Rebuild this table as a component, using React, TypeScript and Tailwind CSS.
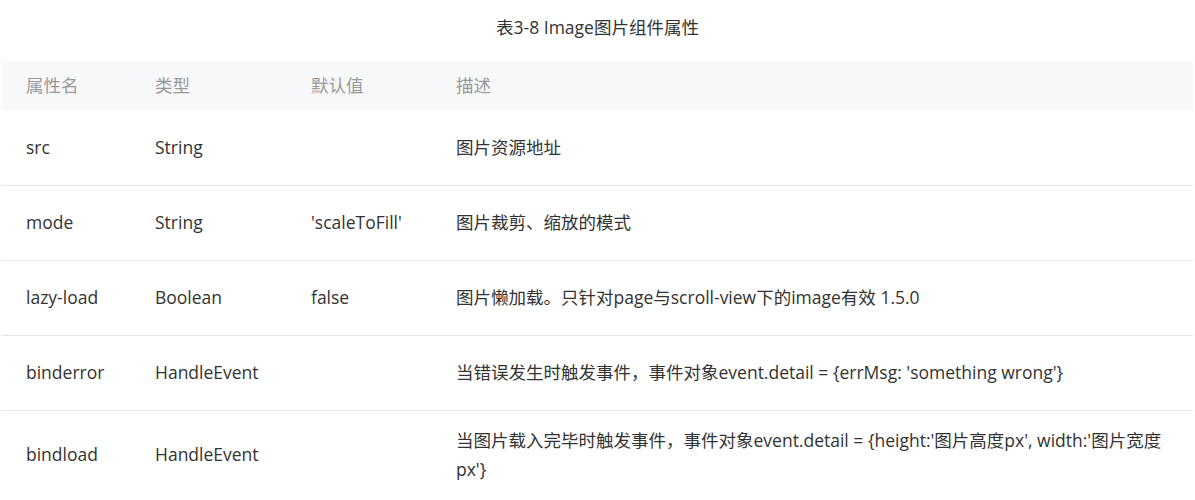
import React from "react";

const rows: { name: string; type: string; def: string; desc: React.ReactNode; last?: boolean }[] = [
  { name: "src", type: "String", def: "", desc: "图片资源地址" },
  { name: "mode", type: "String", def: "'scaleToFill'", desc: "图片裁剪、缩放的模式" },
  { name: "lazy-load", type: "Boolean", def: "false", desc: "图片懒加载。只针对page与scroll-view下的image有效 1.5.0" },
  { name: "binderror", type: "HandleEvent", def: "", desc: "当错误发生时触发事件，事件对象event.detail = {errMsg: 'something wrong'}" },
  {
    name: "bindload",
    type: "HandleEvent",
    def: "",
    desc: (
      <>
        当图片载入完毕时触发事件，事件对象event.detail = {"{"}height:'图片高度px', width:'图片宽度
        <br />
        px'{"}"}
      </>
    ),
    last: true,
  },
];

export default function App() {
  return (
    <div
      className="w-[1195px] h-[500px] overflow-hidden bg-white text-[#333] text-[17.5px]"
      style={{ fontFamily: '"Open Sans", "Noto Sans CJK SC", sans-serif' }}
    >
      <div className="h-[61px] pt-[13px] text-center leading-[28px] text-[#333]">表3-8 Image图片组件属性</div>
      <div className="pl-px pr-[2px]">
        <table className="w-full table-fixed border-collapse">
          <colgroup>
            <col className="w-[129px]" />
            <col className="w-[156px]" />
            <col className="w-[145px]" />
            <col />
          </colgroup>
          <thead>
            <tr className="bg-[#f7f8fa] h-[49px]">
              <th className="px-[25px] text-left font-normal text-[#999] align-middle">属性名</th>
              <th className="px-[25px] text-left font-normal text-[#999] align-middle">类型</th>
              <th className="px-[25px] text-left font-normal text-[#999] align-middle">默认值</th>
              <th className="px-[25px] text-left font-normal text-[#999] align-middle">描述</th>
            </tr>
          </thead>
          <tbody>
            {rows.map((r) => (
              <tr key={r.name} className={(r.last ? "" : "border-b border-[#e8e8e8] ") + "h-[75px]"}>
                <td className="px-[25px] py-[15px] leading-[29px] align-middle">{r.name}</td>
                <td className="px-[25px] py-[15px] leading-[29px] align-middle">{r.type}</td>
                <td className="px-[25px] py-[15px] leading-[29px] align-middle">{r.def}</td>
                <td className="pl-[25px] pr-[10px] py-[15px] leading-[29px] align-middle">{r.desc}</td>
              </tr>
            ))}
          </tbody>
        </table>
      </div>
    </div>
  );
}
